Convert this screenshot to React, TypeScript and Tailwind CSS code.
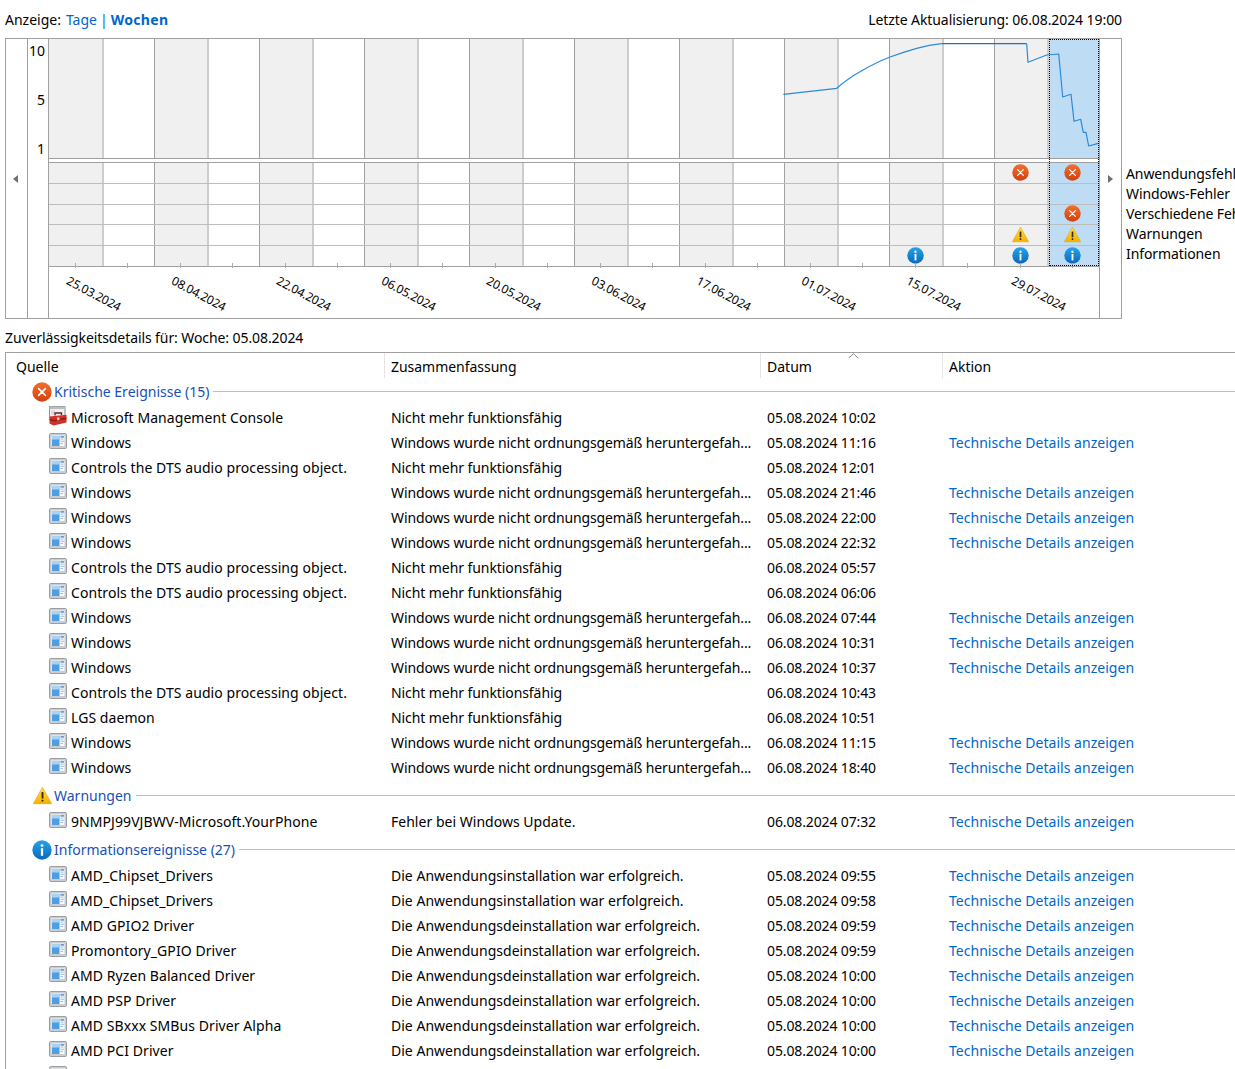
import React from "react";

const FONT = "font-['Noto_Sans','Open_Sans',sans-serif]";

function ErrorIcon({ size = 17, id }: { size?: number; id: string }) {
  return (
    <svg width={size} height={size} viewBox="0 0 20 20" className="shrink-0">
      <defs>
        <linearGradient id={id} x1="0" y1="0" x2="0" y2="1">
          <stop offset="0" stopColor="#f0702f" />
          <stop offset="1" stopColor="#d2400e" />
        </linearGradient>
      </defs>
      <circle cx="10" cy="10" r="9.7" fill={`url(#${id})`} />
      <path d="M6.6 6.6 13.4 13.4M13.4 6.6 6.6 13.4" stroke="#fff" strokeWidth="1.5" strokeLinecap="round" />
    </svg>
  );
}

function InfoIcon({ size = 17, id }: { size?: number; id: string }) {
  return (
    <svg width={size} height={size} viewBox="0 0 20 20" className="shrink-0">
      <defs>
        <linearGradient id={id} x1="0" y1="0" x2="0" y2="1">
          <stop offset="0" stopColor="#25a3e8" />
          <stop offset="1" stopColor="#0a68bd" />
        </linearGradient>
      </defs>
      <circle cx="10" cy="10" r="9.7" fill={`url(#${id})`} />
      <circle cx="10" cy="5.6" r="1.4" fill="#fff" />
      <rect x="8.9" y="8.2" width="2.2" height="7.6" fill="#fff" />
    </svg>
  );
}

function WarnIcon({ size = 17, id }: { size?: number; id: string }) {
  return (
    <svg width={size} height={size} viewBox="0 0 20 20" className="shrink-0">
      <defs>
        <linearGradient id={id} x1="0" y1="0" x2="0" y2="1">
          <stop offset="0" stopColor="#ffe14a" />
          <stop offset="1" stopColor="#f5b000" />
        </linearGradient>
      </defs>
      <path d="M10 1.2 19.6 18.6H.4Z" fill={`url(#${id})`} stroke="#e0a000" strokeWidth="0.6" strokeLinejoin="round" />
      <rect x="9" y="6.4" width="2" height="6.8" rx="0.6" fill="#3a2c00" />
      <rect x="9" y="14.4" width="2" height="2" rx="0.5" fill="#3a2c00" />
    </svg>
  );
}

function AppIcon() {
  return (
    <svg width="18" height="16" viewBox="0 0 18 16" className="shrink-0 -mt-[3px]">
      <rect x="0.5" y="0.5" width="17" height="15" rx="1.2" fill="#c9ccd1" stroke="#9a9da1" />
      <rect x="2.5" y="2.5" width="13" height="10.5" fill="#f7f9fb" />
      <rect x="3" y="3" width="7.5" height="10" fill="#4f9ee2" />
      <rect x="3" y="3" width="7.5" height="3.5" fill="#a9d3f4" />
      <rect x="11.5" y="3.2" width="3.5" height="1.4" fill="#4a86c6" />
      <rect x="11.5" y="5.6" width="3" height="1" fill="#9dbde0" />
      <rect x="11.5" y="7.8" width="3.5" height="1" fill="#9dbde0" />
      <rect x="11.5" y="10" width="2.5" height="1" fill="#9dbde0" />
    </svg>
  );
}

function ToolboxIcon() {
  return (
    <svg width="18" height="20" viewBox="0 0 18 20" className="shrink-0 -mt-[3px]">
      <rect x="0.5" y="0.5" width="15.5" height="11" fill="#eef0f3" stroke="#8d9094" />
      <rect x="0.5" y="0.5" width="15.5" height="2.5" fill="#b9bec5" />
      <rect x="2" y="4.5" width="4" height="4" fill="#d5d8dc" />
      <path d="M6 9.5V7h6.5V9" fill="none" stroke="#7a1a14" strokeWidth="1.3" />
      <path d="M0.5 10.5 17.5 8.8V16.5L4.5 19.6 0.5 17.5Z" fill="#cf3029" />
      <path d="M0.5 12.8 4.5 14 17.5 11.6V13L4.5 15.6 0.5 14.2Z" fill="#8f1c17" />
      <rect x="8" y="11.4" width="2.5" height="2.8" fill="#e8c9a0" />
    </svg>
  );
}

type Kind = "e" | "w" | "i" | null;

const chartRows: Record<number, Kind>[] = [
  { 18: "e", 19: "e" },
  {},
  { 19: "e" },
  { 18: "w", 19: "w" },
  { 16: "i", 18: "i", 19: "i" },
];

const columns = Array.from({ length: 20 }, (_, i) => i);
const dates = [
  "25.03.2024",
  "08.04.2024",
  "22.04.2024",
  "06.05.2024",
  "20.05.2024",
  "03.06.2024",
  "17.06.2024",
  "01.07.2024",
  "15.07.2024",
  "29.07.2024",
];

function cellClass(i: number) {
  if (i === 19) return "border-l-2 border-l-[#cdcdcd] bg-[#bfdcf5] pr-[2px]";
  if (i % 2 === 0) return i === 0 ? "bg-[#f0f0f0]" : "border-l border-l-[#a0a0a0] bg-[#f0f0f0]";
  return "border-l-2 border-l-[#cdcdcd] bg-white";
}

function Chart() {
  return (
    <div className="flex items-start">
      <div className="flex h-[281px] w-[1117px] shrink-0 border border-[#a0a0a0] bg-white">
        <div className="flex w-[21px] shrink-0 items-center justify-center pr-[2px]">
          <div className="h-0 w-0 border-y-[4px] border-r-[5px] border-y-transparent border-r-[#707070]" />
        </div>
        <div className="flex w-[21px] shrink-0 flex-col gap-[29px] border-l border-[#a0a0a0] pr-[3px] pt-[2px] text-right text-[14px] leading-[20px] text-black">
          <div>10</div>
          <div>5</div>
          <div>1</div>
        </div>
        <div className="relative flex w-[1052px] shrink-0 flex-col border-x border-[#a0a0a0]">
          <div className="relative box-content grid h-[119px] shrink-0 grid-cols-[repeat(20,1fr)] border-b border-[#a0a0a0]">
            {columns.map((i) => (
              <div key={i} className={cellClass(i)} />
            ))}
            <svg className="absolute left-0 top-0 h-[119px] w-[1050px]" viewBox="49 39 1050 119" fill="none">
              <path
                d="M783.3 94.3 836.7 88.3C845 81 852 76 860 71.7 870 66 880 61 889.3 57.3 898 54 907 51 916.7 48.3 925 46 933 44.5 941.7 43.7"
                stroke="#2a8ad8"
                strokeWidth="1.2"
              />
              <path d="M941.7 43.7H1026.7" stroke="#1a72c4" strokeWidth="1.2" />
              <path
                d="M1026.7 43.7 1028 62.3 1046.7 55 1058.7 54 1062.7 97 1071 94.3 1074 121.3 1080.7 119.3 1083.3 132.3 1086 132.3 1088.7 146 1098.3 143.3"
                stroke="#2a8ad8"
                strokeWidth="1.2"
                strokeLinejoin="round"
              />
            </svg>
          </div>
          <div className="h-[3px] shrink-0 bg-white" />
          <div className="box-content flex h-[103px] shrink-0 flex-col border-y border-[#a0a0a0]">
            {chartRows.map((row, r) => (
              <div
                key={r}
                className={`grid flex-1 grid-cols-[repeat(20,1fr)] ${r < 4 ? "border-b border-[#bdbdbd]" : ""}`}
              >
                {columns.map((i) => (
                  <div
                    key={i}
                    className={`flex items-center justify-center ${cellClass(i)} ${r > 1 ? "pb-[2px]" : ""}`}
                  >
                    {row[i] === "e" && <ErrorIcon id={`ce${r}${i}`} />}
                    {row[i] === "w" && <WarnIcon id={`cw${r}${i}`} />}
                    {row[i] === "i" && <InfoIcon id={`ci${r}${i}`} />}
                  </div>
                ))}
              </div>
            ))}
          </div>
          <div className="relative flex-1">
            <div className="absolute -top-[4px] left-0 right-0 grid grid-cols-[repeat(20,1fr)]">
              {columns.map((i) => (
                <div key={i} className="flex justify-center">
                  <div className="h-[5px] w-px bg-[#aaaaaa]" />
                </div>
              ))}
            </div>
            <div className="grid h-full grid-cols-[repeat(10,1fr)]">
              {dates.map((d) => (
                <div key={d} className="flex items-center pt-[3px]">
                  <span className="ml-[15px] rotate-[28deg] whitespace-nowrap text-[12px] leading-none tracking-[-0.2px] text-black">
                    {d}
                  </span>
                </div>
              ))}
            </div>
          </div>
          <div className="absolute right-0 top-0 h-[227px] w-[50px] border border-dotted border-black" />
        </div>
        <div className="flex w-[21px] shrink-0 items-center justify-center">
          <div className="h-0 w-0 border-y-[4px] border-l-[5px] border-y-transparent border-l-[#707070]" />
        </div>
      </div>
      <div className="ml-[4px] flex shrink-0 flex-col whitespace-nowrap pt-[126px] text-[14px] leading-[20px] tracking-[-0.1px] text-black">
        <div>Anwendungsfehler</div>
        <div>Windows-Fehler</div>
        <div>Verschiedene Fehler</div>
        <div>Warnungen</div>
        <div>Informationen</div>
      </div>
    </div>
  );
}

const WIN = "Windows wurde nicht ordnungsgemäß heruntergefah...";
const NMF = "Nicht mehr funktionsfähig";
const DTS = "Controls the DTS audio processing object.";
const INST = "Die Anwendungsinstallation war erfolgreich.";
const UNIN = "Die Anwendungsdeinstallation war erfolgreich.";

type Row = [string, string, string, boolean, boolean?];

const critical: Row[] = [
  ["Microsoft Management Console", NMF, "05.08.2024 10:02", false, true],
  ["Windows", WIN, "05.08.2024 11:16", true],
  [DTS, NMF, "05.08.2024 12:01", false],
  ["Windows", WIN, "05.08.2024 21:46", true],
  ["Windows", WIN, "05.08.2024 22:00", true],
  ["Windows", WIN, "05.08.2024 22:32", true],
  [DTS, NMF, "06.08.2024 05:57", false],
  [DTS, NMF, "06.08.2024 06:06", false],
  ["Windows", WIN, "06.08.2024 07:44", true],
  ["Windows", WIN, "06.08.2024 10:31", true],
  ["Windows", WIN, "06.08.2024 10:37", true],
  [DTS, NMF, "06.08.2024 10:43", false],
  ["LGS daemon", NMF, "06.08.2024 10:51", false],
  ["Windows", WIN, "06.08.2024 11:15", true],
  ["Windows", WIN, "06.08.2024 18:40", true],
];

const warnings: Row[] = [
  ["9NMPJ99VJBWV-Microsoft.YourPhone", "Fehler bei Windows Update.", "06.08.2024 07:32", true],
];

const infos: Row[] = [
  ["AMD_Chipset_Drivers", INST, "05.08.2024 09:55", true],
  ["AMD_Chipset_Drivers", INST, "05.08.2024 09:58", true],
  ["AMD GPIO2 Driver", UNIN, "05.08.2024 09:59", true],
  ["Promontory_GPIO Driver", UNIN, "05.08.2024 09:59", true],
  ["AMD Ryzen Balanced Driver", UNIN, "05.08.2024 10:00", true],
  ["AMD PSP Driver", UNIN, "05.08.2024 10:00", true],
  ["AMD SBxxx SMBus Driver Alpha", UNIN, "05.08.2024 10:00", true],
  ["AMD PCI Driver", UNIN, "05.08.2024 10:00", true],
];

const GRID = "grid grid-cols-[378px_376px_182px_1fr]";

function DataRow({ row }: { row: Row }) {
  const [src, sum, date, link, tool] = row;
  const sumClass = sum === WIN ? "tracking-[-0.12px]" : sum === NMF ? "tracking-[-0.08px]" : "tracking-[0.02px]";
  return (
    <div className={`${GRID} h-[25px] items-center whitespace-nowrap text-[14px] text-black`}>
      <div className="flex items-center gap-[4px] pl-[43px]">
        {tool ? <ToolboxIcon /> : <AppIcon />}
        <span className="tracking-[0.07px]">{src}</span>
      </div>
      <div className={`pl-[7px] ${sumClass}`}>{sum}</div>
      <div className="pl-[7px] tracking-[-0.13px]">{date}</div>
      <div className="pl-[7px] tracking-[0.03px] text-[#0066cc]">{link ? "Technische Details anzeigen" : ""}</div>
    </div>
  );
}

function GroupHead({ icon, label, top }: { icon: React.ReactNode; label: string; top?: boolean }) {
  return (
    <div className={`flex h-[26px] items-center pb-[1px] pl-[25px] ${top ? "" : "mt-[3px]"}`}>
      <div className="flex w-[23px] justify-center pr-[1px]">{icon}</div>
      <span className="whitespace-nowrap text-[14px] text-[#1a4fb5]">{label}</span>
      <div className="ml-[4px] h-px flex-1 bg-[#b4bfdc]" />
    </div>
  );
}

function EventList() {
  const head = "flex h-[25px] items-center border-l border-[#e5e5e5] pl-[6px] pt-[2px]";
  return (
    <div className="border-l border-t border-[#a0a0a0]">
      <div className={`${GRID} relative h-[26px] whitespace-nowrap text-[14px] text-black`}>
        <div className="flex h-[25px] items-center pl-[10px] pt-[2px]">Quelle</div>
        <div className={`${head} tracking-[-0.03px]`}>Zusammenfassung</div>
        <div className={head}>Datum</div>
        <div className={head}>Aktion</div>
        <svg className="absolute left-[842px] top-0" width="11" height="6" viewBox="0 0 11 6" fill="none">
          <path d="M.8 5 5.5.8 10.2 5" stroke="#8a8a8a" strokeWidth="1" />
        </svg>
      </div>
      <GroupHead top icon={<ErrorIcon size={20} id="ge" />} label="Kritische Ereignisse (15)" />
      {critical.map((r, i) => (
        <DataRow key={i} row={r} />
      ))}
      <GroupHead icon={<WarnIcon size={19} id="gw" />} label="Warnungen" />
      {warnings.map((r, i) => (
        <DataRow key={i} row={r} />
      ))}
      <GroupHead icon={<InfoIcon size={20} id="gi" />} label="Informationsereignisse (27)" />
      {infos.map((r, i) => (
        <DataRow key={i} row={r} />
      ))}
      <div className="flex h-[25px] items-center pl-[43px]">
        <AppIcon />
      </div>
    </div>
  );
}

export default function App() {
  return (
    <div className={`${FONT} h-[1069px] w-[1235px] overflow-hidden bg-white pl-[5px] text-[14px]`}>
      <div className="flex h-[38px] w-[1117px] items-center justify-between whitespace-nowrap text-black">
        <div>
          Anzeige:<span className="ml-[5px] text-[#0066cc]">Tage</span>
          <span className="ml-[3px] text-[#0066cc]">|</span>
          <span className="ml-[3px] font-bold tracking-[0.3px] text-[#0066cc]">Wochen</span>
        </div>
        <div className="tracking-[-0.08px]">Letzte Aktualisierung: 06.08.2024 19:00</div>
      </div>
      <Chart />
      <div className="flex h-[33px] items-center whitespace-nowrap pt-[4px] tracking-[-0.09px] text-black">
        Zuverlässigkeitsdetails für: Woche: 05.08.2024
      </div>
      <EventList />
    </div>
  );
}
